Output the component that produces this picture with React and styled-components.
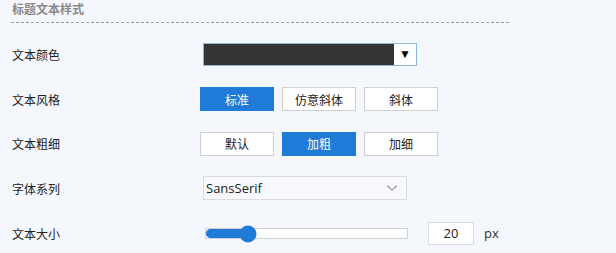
import styled, { createGlobalStyle } from "styled-components";

const Global = createGlobalStyle`
  body {
    margin: 0;
    background: #f4f8fd;
    font-family: "Liberation Sans", "Noto Sans CJK SC", sans-serif;
    font-size: 12px;
    color: #222;
  }
`;

const Panel = styled.div`
  width: 616px;
  height: 253px;
  padding: 0 0 0 12px;
  box-sizing: border-box;
  overflow: hidden;
`;

const Title = styled.div`
  color: #8a8a8a;
  font-weight: bold;
  font-size: 12px;
  line-height: 16px;
  padding-top: 2px;
  width: 497px;
  padding-bottom: 4px;
  border-bottom: 1px dashed #9a9a9a;
  margin-left: -1px;
  padding-left: 1px;
`;

const Rows = styled.div`
  display: flex;
  flex-direction: column;
  padding-top: 9px;
`;

const Row = styled.div`
  display: flex;
  align-items: center;
  height: 44.7px;
`;

const Label = styled.div`
  width: 188px;
  font-size: 12px;
`;

const ColorBox = styled.div`
  display: flex;
  width: 212px;
  height: 21px;
  margin-left: 3px;
  border: 1px solid #8fb6e3;
  background: #fff;
`;

const Swatch = styled.div`
  flex: 1;
  background: #333;
`;

const Arrow = styled.div`
  width: 22px;
  display: flex;
  align-items: center;
  justify-content: center;
  font-size: 12px;
  color: #000;
`;

const Group = styled.div`
  display: flex;
  gap: 8px;
`;

const Btn = styled.div`
  width: 72px;
  height: 22px;
  display: flex;
  align-items: center;
  justify-content: center;
  font-size: 12px;
  border: 1px solid ${(p) => (p.active ? "#1e7bd8" : "#cfcfcf")};
  background: ${(p) => (p.active ? "#1e7bd8" : "#fff")};
  color: ${(p) => (p.active ? "#fff" : "#222")};
`;

const Select = styled.div`
  width: 192px;
  height: 22px;
  margin-left: 3px;
  border: 1px solid #dcdcdc;
  background: #f7f9fc;
  display: flex;
  align-items: center;
  justify-content: space-between;
  padding: 0 8px 0 2px;
  box-sizing: content-box;
  font-family: "Open Sans", "Liberation Sans", sans-serif;
  font-size: 13px;
  color: #222;
`;

const Slider = styled.div`
  position: relative;
  width: 201px;
  height: 9px;
  margin-left: 5px;
  margin-top: 1px;
  border: 1px solid #cfcfcf;
  background: #fff;
`;

const Fill = styled.div`
  height: 100%;
  background: #1e7bd8;
  border-radius: 5px;
`;

const Thumb = styled.div`
  position: absolute;
  top: 50%;
  width: 17px;
  height: 17px;
  border-radius: 50%;
  background: #1e7bd8;
  transform: translate(-50%, -50%);
`;

const NumInput = styled.div`
  width: 44px;
  height: 21px;
  margin-left: 20px;
  border: 1px solid #dcdcdc;
  background: #fff;
  display: flex;
  align-items: center;
  justify-content: center;
  font-family: "Open Sans", "Liberation Sans", sans-serif;
  font-size: 13px;
`;

const Unit = styled.span`
  margin-left: 10px;
  font-family: "Open Sans", "Liberation Sans", sans-serif;
  font-size: 13px;
  color: #333;
`;

const Chevron = () => (
  <svg width="12" height="8" viewBox="0 0 12 8">
    <path d="M1 1.5 L6 6 L11 1.5" fill="none" stroke="#999" strokeWidth="1.1" />
  </svg>
);

export default function App() {
  const pct = 0.21;
  return (
    <Panel>
      <Global />
      <Title>标题文本样式</Title>
      <Rows>
        <Row>
          <Label>文本颜色</Label>
          <ColorBox>
            <Swatch />
            <Arrow>▼</Arrow>
          </ColorBox>
        </Row>
        <Row>
          <Label>文本风格</Label>
          <Group>
            <Btn active>标准</Btn>
            <Btn>仿意斜体</Btn>
            <Btn>斜体</Btn>
          </Group>
        </Row>
        <Row>
          <Label>文本粗细</Label>
          <Group>
            <Btn>默认</Btn>
            <Btn active>加粗</Btn>
            <Btn>加细</Btn>
          </Group>
        </Row>
        <Row>
          <Label>字体系列</Label>
          <Select>
            <span>SansSerif</span>
            <Chevron />
          </Select>
        </Row>
        <Row>
          <Label>文本大小</Label>
          <Slider>
            <Fill style={{ width: `${pct * 100}%` }} />
            <Thumb style={{ left: `${pct * 100}%` }} />
          </Slider>
          <NumInput>20</NumInput>
          <Unit>px</Unit>
        </Row>
      </Rows>
    </Panel>
  );
}
